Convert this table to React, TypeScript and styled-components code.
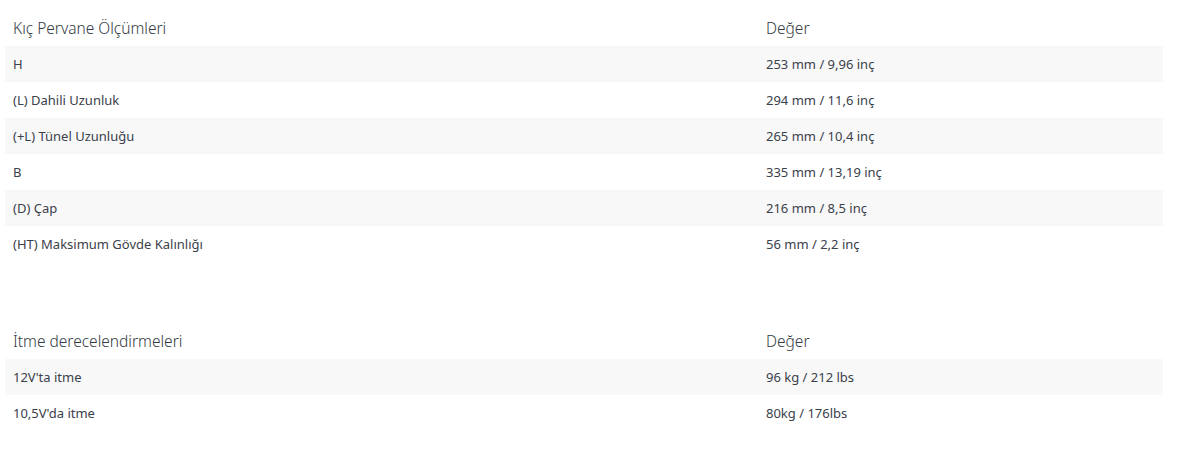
import React from 'react';
import styled, { createGlobalStyle } from 'styled-components';

type Row = { label: string; value: string };

type Section = {
	title: string;
	rows: Row[];
};

const sections: Section[] = [
	{
		title: 'Kıç Pervane Ölçümleri',
		rows: [
			{ label: 'H', value: '253 mm / 9,96 inç' },
			{ label: '(L) Dahili Uzunluk', value: '294 mm / 11,6 inç' },
			{ label: '(+L) Tünel Uzunluğu', value: '265 mm / 10,4 inç' },
			{ label: 'B', value: '335 mm / 13,19 inç' },
			{ label: '(D) Çap', value: '216 mm / 8,5 inç' },
			{ label: '(HT) Maksimum Gövde Kalınlığı', value: '56 mm / 2,2 inç' },
		],
	},
	{
		title: 'İtme derecelendirmeleri',
		rows: [
			{ label: "12V'ta itme", value: '96 kg / 212 lbs' },
			{ label: "10,5V'da itme", value: '80kg / 176lbs' },
		],
	},
];

const GlobalStyle = createGlobalStyle`
	html, body {
		margin: 0;
		background: #fff;
	}
	body {
		font-family: "Noto Sans", "Open Sans", sans-serif;
		color: #2f3640;
	}
`;

const Page = styled.div`
	display: flex;
	flex-direction: column;
	gap: 61px;
	padding: 10px 22px 0 5px;
`;

const Table = styled.table`
	width: 1158px;
	border-collapse: collapse;
	table-layout: fixed;
`;

const HeadCell = styled.th<{ wide?: boolean }>`
	width: ${props => props.wide ? '737px' : 'auto'};
	height: 36px;
	padding: 0 8px;
	text-align: left;
	font-size: 15.5px;
	font-weight: 300;
	color: #333a44;
	vertical-align: middle;
`;

const BodyRow = styled.tr<{ striped: boolean }>`
	background: ${props => props.striped ? '#f8f8f8' : 'transparent'};
`;

const Cell = styled.td`
	height: 36px;
	padding: 0 8px;
	font-size: 13px;
	font-weight: 400;
	color: #3a414b;
	vertical-align: middle;
	white-space: nowrap;
`;

const SpecTable = ({ section }: { section: Section }) => (
	<Table>
		<thead>
			<tr>
				<HeadCell wide>{section.title}</HeadCell>
				<HeadCell>Değer</HeadCell>
			</tr>
		</thead>
		<tbody>
			{section.rows.map((r, i) => (
				<BodyRow key={i} striped={i % 2 === 0}>
					<Cell>{r.label}</Cell>
					<Cell>{r.value}</Cell>
				</BodyRow>
			))}
		</tbody>
	</Table>
);

const App = () => (
	<>
		<GlobalStyle />
		<Page>
			{sections.map((s, i) => <SpecTable key={i} section={s} />)}
		</Page>
	</>
);

export default App;
